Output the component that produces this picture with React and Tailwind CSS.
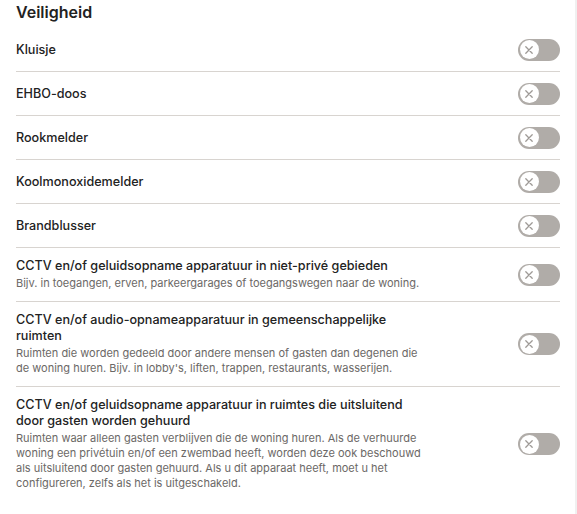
const items = [
  { title: "Kluisje" },
  { title: "EHBO-doos" },
  { title: "Rookmelder" },
  { title: "Koolmonoxidemelder" },
  { title: "Brandblusser" },
  {
    title: "CCTV en/of geluidsopname apparatuur in niet-privé gebieden",
    desc: "Bijv. in toegangen, erven, parkeergarages of toegangswegen naar de woning.",
  },
  {
    title: "CCTV en/of audio-opnameapparatuur in gemeenschappelijke ruimten",
    desc: "Ruimten die worden gedeeld door andere mensen of gasten dan degenen die de woning huren. Bijv. in lobby's, liften, trappen, restaurants, wasserijen.",
  },
  {
    title: "CCTV en/of geluidsopname apparatuur in ruimtes die uitsluitend door gasten worden gehuurd",
    desc: "Ruimten waar alleen gasten verblijven die de woning huren. Als de verhuurde woning een privétuin en/of een zwembad heeft, worden deze ook beschouwd als uitsluitend door gasten gehuurd. Als u dit apparaat heeft, moet u het configureren, zelfs als het is uitgeschakeld.",
  },
];

function Toggle() {
  return (
    <div className="flex h-[22px] w-[42px] shrink-0 items-center rounded-full bg-[#b0aca8] px-[1.5px]">
      <div className="flex h-[19px] w-[19px] items-center justify-center rounded-full bg-white">
        <svg width="10" height="10" viewBox="0 0 10 10" fill="none">
          <path d="M1.8 1.8l6.4 6.4M8.2 1.8l-6.4 6.4" stroke="#9e9a96" strokeWidth="1.3" strokeLinecap="round" />
        </svg>
      </div>
    </div>
  );
}

export default function App() {
  return (
    <div className="flex min-h-screen w-[577px] bg-white font-['Inter',sans-serif] text-[#222]">
      <div className="w-[575px] pl-4 pr-[15px]">
        <h2 className="mb-[5px] pt-[1px] text-[16px] font-semibold leading-[22px]">Veiligheid</h2>
        <div className="flex flex-col">
          {items.map((item, i) => (
            <div
              key={i}
              className={`flex items-center justify-between ${
                item.desc ? "py-[10px]" : "h-[44px]"
              } ${i < items.length - 1 ? "border-b border-[#d8d4d0]" : ""}`}
            >
              <div className="w-[412px]">
                <p className="text-[12.6px] font-medium leading-[16px]">{item.title}</p>
                {item.desc && (
                  <p className="mt-[2px] text-[11px] leading-[15px] text-[#6b6866]">{item.desc}</p>
                )}
              </div>
              <Toggle />
            </div>
          ))}
        </div>
      </div>
      <div className="w-[2px] bg-[#f0f0f0]" />
    </div>
  );
}
